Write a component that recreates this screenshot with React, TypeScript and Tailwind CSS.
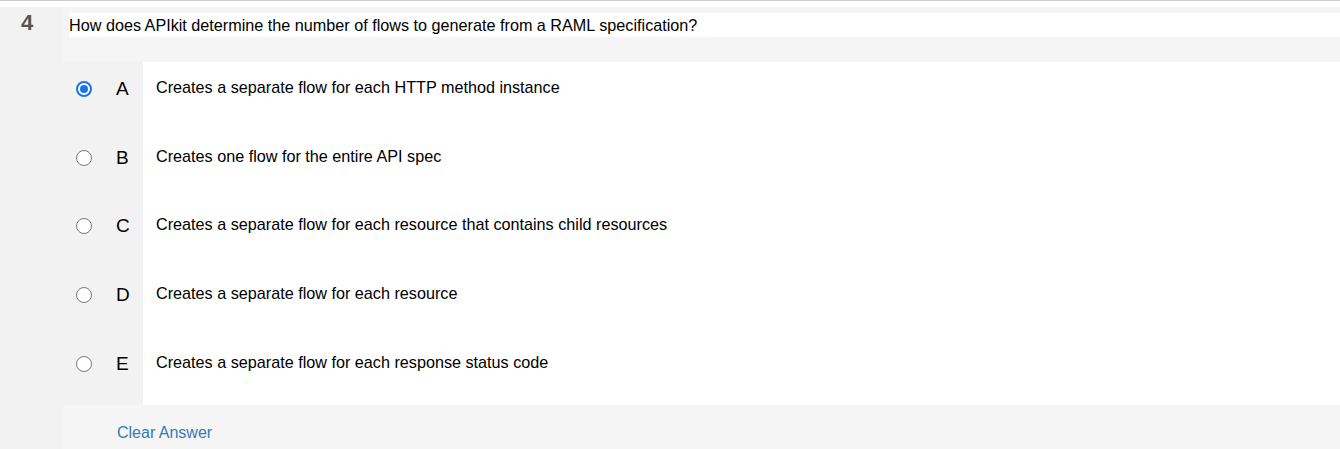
import React from 'react';

const options = [
  { key: 'A', text: 'Creates a separate flow for each HTTP method instance' },
  { key: 'B', text: 'Creates one flow for the entire API spec' },
  { key: 'C', text: 'Creates a separate flow for each resource that contains child resources' },
  { key: 'D', text: 'Creates a separate flow for each resource' },
  { key: 'E', text: 'Creates a separate flow for each response status code' },
];

function Radio({ checked }: { checked: boolean }) {
  return checked ? (
    <span className="w-[16px] h-[16px] rounded-full border-2 border-[#1a73f0] bg-white flex items-center justify-center">
      <span className="w-[8px] h-[8px] rounded-full bg-[#1a73f0]" />
    </span>
  ) : (
    <span className="w-[16px] h-[16px] rounded-full border-[1.5px] border-[#7a7a7a] bg-white" />
  );
}

export default function App() {
  return (
    <div className="w-[1340px] h-[449px] bg-white overflow-hidden" style={{ fontFamily: '"Liberation Sans", Arial, sans-serif' }}>
      <div className="h-px bg-[#cccccc]" />
      <div className="h-[6px] bg-white" />
      <div className="flex h-[442px]">
        {/* question number */}
        <div className="w-[63px] bg-[#f2f2f2] pl-[21px] pt-[3px]">
          <span className="text-[22px] leading-[26px] font-bold text-[#555555]">4</span>
        </div>

        <div className="flex-1 flex flex-col bg-[#f5f5f5]">
          {/* question text */}
          <div className="pt-[6px] pl-[6px] pb-[25px]">
            <div className="bg-white h-[24px] flex items-center text-[16.2px] text-black">
              How does APIkit determine the number of flows to generate from a RAML specification?
            </div>
          </div>

          {/* answer options */}
          <div className="flex flex-col">
            {options.map((o) => (
              <div key={o.key} className="flex h-[68.7px]">
                <div className="w-[80px] bg-[#f2f2f2] flex items-start pt-[17px]">
                  <div className="w-[29px] flex justify-end pt-[2px]">
                    <Radio checked={o.key === 'A'} />
                  </div>
                  <span className="ml-[24px] text-[19px] leading-[20px] text-black">{o.key}</span>
                </div>
                <div className="flex-1 bg-white pl-[13px] pt-[16px] text-[16.2px] leading-[18px] text-black">
                  {o.text}
                </div>
              </div>
            ))}
          </div>

          {/* footer */}
          <div className="flex-1 flex items-center pl-[54px] pt-[12px]">
            <span className="text-[16px] text-[#337ab7]">Clear Answer</span>
          </div>
        </div>
      </div>
    </div>
  );
}
